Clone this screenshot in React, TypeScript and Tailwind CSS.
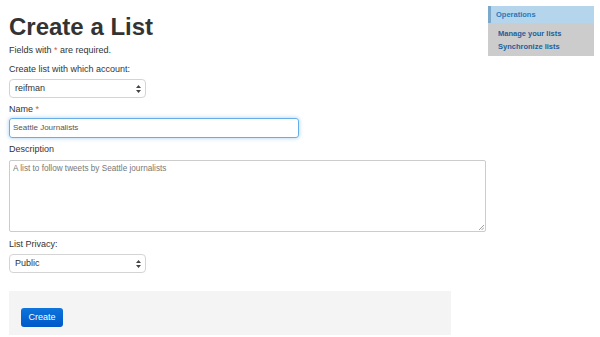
export default function App() {
  return (
    <div className="relative min-h-[337px] bg-white font-['Liberation_Sans',Arial,sans-serif] text-[#333]">
      <div className="flex pl-[9px]">
        <main className="w-[477px] shrink-0">
          <h1 className="mt-[13px] text-[24px] font-bold leading-[28px] text-[#333]">
            Create a List
          </h1>
          <p className="mt-[3px] text-[9px] leading-[12px]">
            Fields with <span className="text-[#d9534f]">*</span> are required.
          </p>

          <label className="mt-[7px] block text-[9px] leading-[12px]">
            Create list with which account:
          </label>
          <Select value="reifman" />

          <label className="mt-[5px] block text-[9px] leading-[12px]">
            Name <span className="text-[#d9534f]">*</span>
          </label>
          <div className="mt-[3px] flex h-[20px] w-[290px] items-center rounded-[3px] border border-[#66afe9] px-[3px] text-[8px] text-[#555] shadow-[0_0_4px_rgba(102,175,233,0.6)]">
            Seattle Journalists
          </div>

          <label className="mt-[5px] block text-[9px] leading-[12px]">Description</label>
          <div className="relative mt-[5px] h-[72px] w-[477px] rounded-[2px] border border-[#ccc] px-[3px] pt-[3px] text-[8.2px] leading-[10px] text-[#777]">
            A list to follow tweets by Seattle journalists
            <svg className="absolute bottom-[1px] right-[1px]" width="6" height="6" viewBox="0 0 6 6">
              <path d="M1 6L6 1M3.5 6L6 3.5" stroke="#888" strokeWidth="0.8" />
            </svg>
          </div>

          <label className="mt-[6px] block text-[9px] leading-[12px]">List Privacy:</label>
          <Select value="Public" />

          <div className="mt-[18px] h-[44px] w-[442px] bg-[#f4f4f4] pl-[12px] pt-[12px]">
            <button className="h-[19px] w-[42px] rounded-[3px] bg-gradient-to-b from-[#0f74dc] to-[#0058c8] text-[9px] text-white">
              Create
            </button>
          </div>
        </main>

        <aside className="ml-[2px] mt-[6px] w-[106px] self-start bg-[#cccccc] pb-[3px]">
          <div className="h-[17px] border-l-[3px] border-[#7aa9cc] bg-[#b5d5ec] pl-[5px] text-[7.5px] font-bold leading-[17px] text-[#2a78b8]">
            Operations
          </div>
          <ul className="mt-[4px] pl-[10px] text-[7.5px] font-bold leading-[13px] text-[#1c5f9c]">
            <li>Manage your lists</li>
            <li>Synchronize lists</li>
          </ul>
        </aside>
      </div>
    </div>
  );
}

function Select({ value }: { value: string }) {
  return (
    <div className="mt-[4px] flex h-[19px] w-[137px] items-center justify-between rounded-[4px] border border-[#d4d4d4] bg-white pl-[5px] pr-[4px] text-[9px] text-[#333]">
      <span>{value}</span>
      <svg width="5" height="8" viewBox="0 0 5 8">
        <path d="M2.5 0L5 3H0z M2.5 8L0 5h5z" fill="#444" />
      </svg>
    </div>
  );
}
